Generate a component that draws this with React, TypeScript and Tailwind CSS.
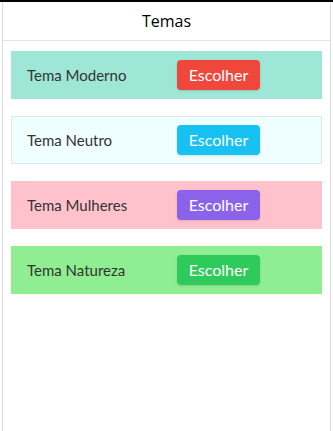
import React from "react";

const themes = [
  { name: "Tema Moderno", card: "bg-[#9ee7d7]", btn: "bg-[#f0473d]", border: "border-[#9ee7d7]" },
  { name: "Tema Neutro", card: "bg-[#efffff]", btn: "bg-[#17c1f1]", border: "border-[#dfe7e7]" },
  { name: "Tema Mulheres", card: "bg-[#ffc1cb]", btn: "bg-[#8a63ea]", border: "border-[#ffc1cb]" },
  { name: "Tema Natureza", card: "bg-[#90ee92]", btn: "bg-[#2ecb5c]", border: "border-[#90ee92]" },
];

export default function App() {
  return (
    <div className="w-[333px] h-[431px] bg-white flex flex-col" style={{ fontFamily: "Lato, 'Open Sans', sans-serif" }}>
      <div className="h-[2px] bg-black shrink-0" />
      <div className="flex-1 ml-[2px] w-[329px] border-l border-r border-[#dcdcdc] flex flex-col">
        <div className="h-[39px] flex items-center justify-center border-b border-[#e6e6e6] text-[16px] text-black" style={{ fontFamily: "'Open Sans', sans-serif" }}>
          Temas
        </div>
        <div className="flex flex-col gap-[17px] pt-[10px] pl-[8px] pr-[8px]">
          {themes.map((t) => (
            <div key={t.name} className={`h-[48px] flex items-center border ${t.card} ${t.border}`}>
              <div className="w-[165px] shrink-0 pl-[15px] text-[15px] text-[#333]">{t.name}</div>
              <button className={`w-[83px] h-[30px] rounded-[4px] text-white text-[16px] ${t.btn} shadow-sm`}>
                Escolher
              </button>
            </div>
          ))}
        </div>
      </div>
    </div>
  );
}
